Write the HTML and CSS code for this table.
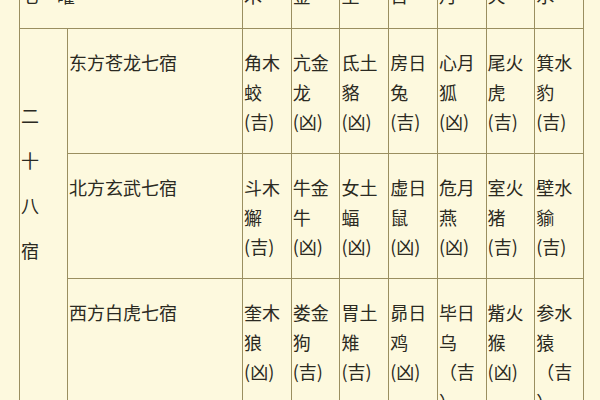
FILE: index.html
```html
<!DOCTYPE html>
<html lang="zh">
<head>
<meta charset="utf-8">
<title>二十八宿</title>
<link rel="stylesheet" href="styles.css">
</head>
<body>
<table class="xiu">
  <colgroup>
    <col class="c-group">
    <col class="c-name">
    <col class="c-day"><col class="c-day"><col class="c-day"><col class="c-day"><col class="c-day"><col class="c-day"><col class="c-day">
  </colgroup>
  <tr class="head">
    <td colspan="2">七　曜</td>
    <td>木</td><td>金</td><td>土</td><td>日</td><td>月</td><td>火</td><td>水</td>
  </tr>
  <tr class="row">
    <td rowspan="4" class="group"><span>二</span><span>十</span><span>八</span><span>宿</span></td>
    <td>东方苍龙七宿</td>
    <td>角木<br>蛟<br>(吉)</td>
    <td>亢金<br>龙<br>(凶)</td>
    <td>氐土<br>貉<br>(凶)</td>
    <td>房日<br>兔<br>(吉)</td>
    <td>心月<br>狐<br>(凶)</td>
    <td>尾火<br>虎<br>(吉)</td>
    <td>箕水<br>豹<br>(吉)</td>
  </tr>
  <tr class="row">
    <td>北方玄武七宿</td>
    <td>斗木<br>獬<br>(吉)</td>
    <td>牛金<br>牛<br>(凶)</td>
    <td>女土<br>蝠<br>(凶)</td>
    <td>虚日<br>鼠<br>(凶)</td>
    <td>危月<br>燕<br>(凶)</td>
    <td>室火<br>猪<br>(吉)</td>
    <td>壁水<br>貐<br>(吉)</td>
  </tr>
  <tr class="row">
    <td>西方白虎七宿</td>
    <td>奎木<br>狼<br>(凶)</td>
    <td>娄金<br>狗<br>(吉)</td>
    <td>胃土<br>雉<br>(吉)</td>
    <td>昴日<br>鸡<br>(凶)</td>
    <td>毕日<br>乌<br>（吉<br>）</td>
    <td>觜火<br>猴<br>(凶)</td>
    <td>参水<br>猿<br>（吉<br>）</td>
  </tr>
  <tr class="row">
    <td>南方朱雀七宿</td>
    <td>井木<br>犴<br>(凶)</td>
    <td>鬼金<br>羊<br>(凶)</td>
    <td>柳土<br>獐<br>(凶)</td>
    <td>星日<br>马<br>(凶)</td>
    <td>张月<br>鹿<br>(吉)</td>
    <td>翼火<br>蛇<br>(凶)</td>
    <td>轸水<br>蚓<br>(吉)</td>
  </tr>
</table>
</body>
</html>
```

FILE: styles.css
```css
html, body {
  margin: 0;
  padding: 0;
  background: #fdf9de;
  height: 400px;
  overflow: hidden;
}

body {
  font-family: "Noto Sans CJK SC", "Noto Sans", sans-serif;
  font-size: 18px;
  color: #2b2a22;
}

.xiu {
  border-collapse: collapse;
  table-layout: fixed;
  width: 565px;
  margin: -39px 0 0 19px;
}

.c-group { width: 48px; }
.c-name { width: 175px; }
.c-day { width: 48.7px; }

.xiu td {
  border: 1px solid #9a8f60;
  vertical-align: top;
  padding: 19px 0 0 1px;
  line-height: 29.5px;
  white-space: nowrap;
}

.head td {
  height: 47px;
}

.row td {
  height: 105px;
}

.xiu td.group {
  padding-top: 64px;
}

.group span {
  display: block;
  line-height: 45px;
}
```
